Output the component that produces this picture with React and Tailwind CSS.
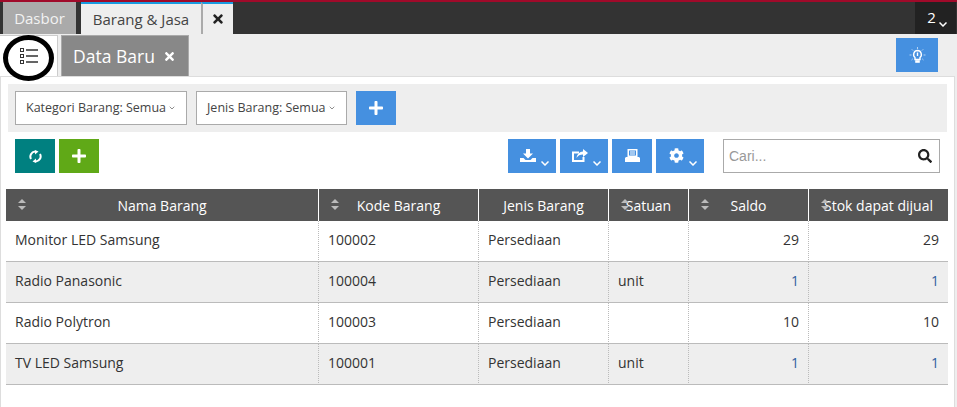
import { FaTimes, FaPlus, FaCog, FaSearch } from 'react-icons/fa';
import { ChevronDown } from 'lucide-react';

const cols = [
  { label: 'Nama Barang', w: 'w-[312px]', sort: 'left-[12px]' },
  { label: 'Kode Barang', w: 'w-[160px]', sort: 'left-[12px]' },
  { label: 'Jenis Barang', w: 'w-[130px]', sort: '' },
  { label: 'Satuan', w: 'w-[80px]', sort: 'left-[12px]' },
  { label: 'Saldo', w: 'w-[120px]', sort: 'left-[12px]' },
  { label: 'Stok dapat dijual', w: 'w-[140px]', sort: 'left-[12px]' },
];

const rows = [
  ['Monitor LED Samsung', '100002', 'Persediaan', '', '29', '29'],
  ['Radio Panasonic', '100004', 'Persediaan', 'unit', '1', '1'],
  ['Radio Polytron', '100003', 'Persediaan', '', '10', '10'],
  ['TV LED Samsung', '100001', 'Persediaan', 'unit', '1', '1'],
];

function SortIcon({ className }) {
  return (
    <svg className={'absolute top-[10px] ' + className} width="8" height="11" viewBox="0 0 8 11" fill="#bbb">
      <path d="M4 0 L8 4 H0 Z" />
      <path d="M0 7 H8 L4 11 Z" />
    </svg>
  );
}

function ListIcon() {
  return (
    <svg width="18" height="17" viewBox="0 0 18 17" fill="none" stroke="#333">
      <rect x="0.5" y="0.5" width="3" height="3" />
      <rect x="0.5" y="6.5" width="3" height="3" />
      <rect x="0.5" y="12.5" width="3" height="3" />
      <path d="M6 2 H18 M6 8 H18 M6 14 H18" strokeWidth="1.6" />
    </svg>
  );
}

function BulbIcon() {
  return (
    <svg width="17" height="17" viewBox="0 0 17 17" fill="none" stroke="#fff">
      <path d="M8.5 3.5 a4 4 0 0 0 -2.5 7 v2 h5 v-2 a4 4 0 0 0 -2.5 -7 Z" strokeWidth="1.4" />
      <path d="M8.5 5.5 v3.5" strokeWidth="1.4" />
      <path d="M6.5 13.5 h4 v2 h-4 Z" fill="#fff" strokeWidth="0.6" />
      <path d="M8.5 0 v2 M2.8 2.3 l1.3 1.3 M14.2 2.3 l-1.3 1.3 M0.5 8 h2 M14.5 8 h2 M2.5 13 l1.3 -1.2 M14.5 13 l-1.3 -1.2" strokeWidth="0.8" opacity="0.75" />
    </svg>
  );
}

function SyncIcon() {
  return (
    <svg width="13" height="13" viewBox="0 0 13 13" fill="none" stroke="#fff" strokeWidth="2">
      <path d="M2 9 A5 5 0 0 1 6 1.6" />
      <path d="M11 4 A5 5 0 0 1 7 11.4" />
      <path d="M6 0 L9.5 1.6 L6 4.5 Z" fill="#fff" stroke="none" />
      <path d="M7 13 L3.5 11.4 L7 8.5 Z" fill="#fff" stroke="none" />
    </svg>
  );
}

function DownloadIcon() {
  return (
    <svg width="16" height="13" viewBox="0 0 16 13" fill="#fff">
      <path d="M6 0 H10 V4.5 H13 L8 9.5 L3 4.5 H6 Z" />
      <path d="M0 9 H3.5 L5.5 11 H10.5 L12.5 9 H16 V13 H0 Z" />
    </svg>
  );
}

function ShareIcon() {
  return (
    <svg width="16" height="13" viewBox="0 0 16 13" fill="none">
      <path d="M7 3.5 H1 V12 H11.5 V8" stroke="#fff" strokeWidth="2" />
      <path d="M11 0 L16 4 L11 8 V5.5 C8 5.5 6 6.5 4.5 9 C5 5.5 7.5 2.8 11 2.6 Z" fill="#fff" />
    </svg>
  );
}

function PrintIcon() {
  return (
    <svg width="15" height="13" viewBox="0 0 15 13" fill="#fff">
      <path d="M2.5 0 H12.5 V8 H2.5 Z M4 1.5 V6.5 H11 V1.5 Z" fillRule="evenodd" />
      <path d="M5 2.5 H10 V3.5 H5 Z M5 4.5 H10 V5.5 H5 Z" />
      <path d="M1 8 H14 L15 9 V13 H0 V9 Z" />
    </svg>
  );
}

function Caret() {
  return (
    <svg className="absolute bottom-[7px] right-[7px]" width="8" height="5" viewBox="0 0 8 5" fill="none" stroke="#fff" strokeWidth="1.5">
      <path d="M0.5 0.5 L4 4 L7.5 0.5" />
    </svg>
  );
}

function BlueBtn({ w, children, caret }) {
  return (
    <button className={'relative flex h-[34px] items-center justify-center bg-[#4590e0] text-white ' + w}>
      {children}
      {caret && <Caret />}
    </button>
  );
}

function Filter({ w, label }) {
  return (
    <div className={'flex h-[34px] items-center border border-[#aaa] bg-white pl-[10px] text-[12.5px] text-[#444] ' + w}>
      <span>{label}</span>
      <ChevronDown size={8} strokeWidth={2} className="ml-[2px] text-[#555]" />
    </div>
  );
}

export default function App() {
  return (
    <div className="h-[407px] w-[957px] overflow-hidden bg-[#eee] font-['Open_Sans',sans-serif] text-[#333]">
      <div className="h-[2px] bg-[#a00a2a]" />
      <div className="flex h-[32px] bg-[#333]">
        <div className="ml-[3px] flex h-full w-[73px] items-center justify-center bg-[#aaa] text-[15px] text-[#f2f2f2]">Dasbor</div>
        <div className="ml-[5px] flex h-full w-[120px] items-center justify-center border-t-2 border-[#1a9be0] bg-[#eee] text-[15px] text-[#444]">Barang &amp; Jasa</div>
        <div className="flex h-full w-[32px] items-center justify-center border-t-2 border-l-2 border-t-[#1a9be0] border-l-[#aaa] bg-[#eee] text-[#222]">
          <FaTimes size={14} />
        </div>
        <div className="ml-auto mr-[1px] flex h-full w-[41px] items-center justify-center gap-[3px] bg-[#222] text-[15px] text-white">
          <span className="ml-[3px] -mt-[2px]">2</span>
          <svg className="mt-[12px]" width="8" height="5" viewBox="0 0 8 5" fill="none" stroke="#fff" strokeWidth="1.5">
            <path d="M0.5 0.5 L4 4 L7.5 0.5" />
          </svg>
        </div>
      </div>

      <div className="relative flex h-[42px] items-end">
        <div className="flex h-[41px] w-[58px] items-center justify-center border-t border-r border-[#ccc] bg-white pt-[1px]">
          <ListIcon />
        </div>
        <div className="absolute left-[3px] top-[1px] h-[46px] w-[51px] rounded-[50%] border-[5px] border-black" />
        <div className="ml-[3px] flex h-[41px] w-[128px] items-center justify-center gap-[8px] border border-b-0 border-[#aaa] bg-[#888] pr-[1px] text-[17.5px] text-white">
          <span>Data Baru</span>
          <FaTimes size={13} />
        </div>
        <div className="ml-auto mb-[4px] mr-[19px] flex h-[34px] w-[42px] items-center justify-center bg-[#4590e0]">
          <BulbIcon />
        </div>
      </div>

      <div className="h-[331px] w-[955px] border-x border-t border-[#ddd] bg-white">
        <div className="mx-[7px] mt-[7px] flex h-[48px] items-center gap-[9px] bg-[#eee] pl-[7px]">
          <Filter w="w-[172px]" label="Kategori Barang: Semua" />
          <Filter w="w-[151px]" label="Jenis Barang: Semua" />
          <BlueBtn w="w-[40px]"><FaPlus size={16} /></BlueBtn>
        </div>

        <div className="mt-[7px] flex h-[34px] pl-[14px]">
          <button className="flex h-[34px] w-[40px] items-center justify-center bg-[#008080]"><SyncIcon /></button>
          <button className="ml-[4px] flex h-[34px] w-[40px] items-center justify-center bg-[#60a917] text-white"><FaPlus size={16} /></button>
          <div className="ml-[409px] flex gap-[4px]">
            <BlueBtn w="w-[48px]" caret><span className="mr-[8px] -mt-[2px]"><DownloadIcon /></span></BlueBtn>
            <BlueBtn w="w-[48px]" caret><span className="mr-[8px] -mt-[2px]"><ShareIcon /></span></BlueBtn>
            <BlueBtn w="w-[40px]"><span className="-mt-[2px]"><PrintIcon /></span></BlueBtn>
            <BlueBtn w="w-[48px]" caret><FaCog size={15} className="mr-[8px] -mt-[2px]" /></BlueBtn>
          </div>
          <div className="ml-[19px] flex h-[34px] w-[217px] items-center justify-between border border-[#aaa] bg-white pl-[5px] pr-[7px]">
            <span className="font-['Liberation_Sans',sans-serif] text-[14px] text-[#999]">Cari...</span>
            <FaSearch size={14} className="text-[#222]" />
          </div>
        </div>

        <table className="ml-[5px] mt-[16px] w-[942px] table-fixed border-separate border-spacing-0 text-[14px]">
          <thead>
            <tr className="h-[32px] bg-[#555] text-white">
              {cols.map((c, i) => (
                <th key={c.label} className={'relative p-0 text-center text-[14px] font-normal ' + c.w + (i > 0 ? ' border-l border-white' : '')}>
                  {c.sort && <SortIcon className={c.sort} />}
                  {c.label}
                </th>
              ))}
            </tr>
          </thead>
          <tbody>
            {rows.map((r, i) => (
              <tr key={r[0]} className={'h-[41px] ' + (i % 2 ? 'bg-[#eee]' : 'bg-white')}>
                {r.map((v, j) => (
                  <td
                    key={j}
                    className={
                      'border-b border-b-[#bbb] px-[9px] pb-[4px] ' +
                      (j > 0 ? 'border-l border-l-[#bbb] [border-left-style:dotted] ' : '') +
                      (j > 3 ? 'text-right ' : '') +
                      (j > 3 && v === '1' ? 'text-[#2f5f9f]' : '')
                    }
                  >
                    {v}
                  </td>
                ))}
              </tr>
            ))}
          </tbody>
        </table>
      </div>
    </div>
  );
}
